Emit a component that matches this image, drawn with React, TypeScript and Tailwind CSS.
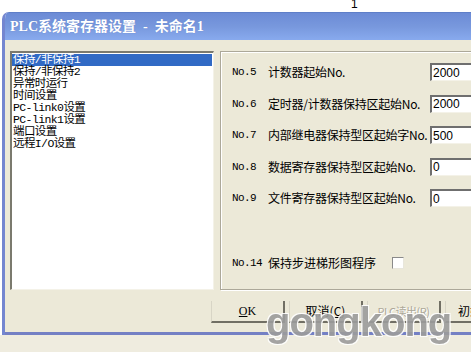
import React from "react";

const items = [
  "保持/非保持1",
  "保持/非保持2",
  "异常时运行",
  "时间设置",
  "PC-link0设置",
  "PC-link1设置",
  "端口设置",
  "远程I/O设置",
];

const rows = [
  { no: "No.5", label: "计数器起始No.", value: "2000" },
  { no: "No.6", label: "定时器/计数器保持区起始No.", value: "2000" },
  { no: "No.7", label: "内部继电器保持型区起始字No.", value: "500" },
  { no: "No.8", label: "数据寄存器保持型区起始No.", value: "0" },
  { no: "No.9", label: "文件寄存器保持型区起始No.", value: "0" },
];

const font = "font-['Liberation_Serif','Noto_Sans_CJK_SC',serif]";

export default function App() {
  return (
    <div className={`relative w-[471px] h-[352px] overflow-hidden bg-white ${font} text-[12px] leading-[12px] text-black`}>
      <div className="h-[12px] relative">
        <span className="absolute left-[351px] top-[-2px] text-[12px] leading-[12px] font-['Liberation_Sans',sans-serif]">1</span>
      </div>
      <div className="ml-[2px] w-[560px] rounded-tl-[7px] overflow-hidden border-l-[3px] border-[#7486d0] flex flex-col">
        <div className="h-[28px] bg-gradient-to-b from-[#6c8bd6] via-[#7898dd] to-[#88aaee] border-t border-[#5f7fc8] flex items-center pl-[5px]">
          <span className="text-white text-[14px] leading-[14px] font-bold whitespace-pre font-['Liberation_Serif','Noto_Sans_CJK_SC',serif] [text-shadow:0_0_1px_#5a78c0]">
            {"PLC系统寄存器设置  -  未命名1"}
          </span>
        </div>
        <div className="h-[292px] bg-[#ece9d8] flex flex-col pl-[5px] pt-[11px]">
          <div className="flex gap-[6px] h-[239px]">
            <div className="w-[204px] h-full bg-white border-t-2 border-l-2 border-[#7b7a6e] border-r border-b border-r-[#f4f2e8] border-b-[#f4f2e8] pt-[1px] pr-[1px]">
              {items.map((t, i) => (
                <div
                  key={t}
                  className={`h-[12px] pl-[1px] whitespace-nowrap font-['Liberation_Mono','Noto_Sans_CJK_SC',monospace] text-[11.5px] leading-[12px] tracking-[-0.6px] ${
                    i === 0 ? "bg-[#316ac5] text-white" : ""
                  }`}
                >
                  {t}
                </div>
              ))}
            </div>
            <div className="flex-1 h-full border border-[#aca899] shadow-[inset_1px_1px_0_#fff,1px_1px_0_#fff] pl-[11px] pt-[11px] flex flex-col">
              <div className="flex flex-col gap-[13.5px]">
                {rows.map((r) => (
                  <div key={r.no} className="flex items-center h-[18px]">
                    <span className="w-[36px] text-[11px] font-['Liberation_Mono',monospace] tracking-[-0.6px] whitespace-nowrap">{r.no}</span>
                    <span className="w-[162px] whitespace-nowrap font-['Noto_Sans_CJK_SC',sans-serif] text-[12px] tracking-[-0.25px]">
                      {r.label}
                    </span>
                    <div className="w-[70px] h-[18px] bg-white border-t-2 border-l-2 border-[#6f6f6f] border-r border-b border-r-[#f4f2e8] border-b-[#f4f2e8] flex items-center pl-[1px] font-['Liberation_Sans',sans-serif] text-[12px]">
                      {r.value}
                    </div>
                  </div>
                ))}
              </div>
              <div className="flex items-center h-[18px] mt-[47px]">
                <span className="w-[36px] text-[11px] font-['Liberation_Mono',monospace] tracking-[-0.6px] whitespace-nowrap">No.14</span>
                <span className="w-[124px] whitespace-nowrap font-['Noto_Sans_CJK_SC',sans-serif] text-[12px]">
                  保持步进梯形图程序
                </span>
                <div className="w-[12px] h-[12px] bg-white border-t border-l border-[#8a8a8a] border-r border-b border-r-[#e8e6dc] border-b-[#e8e6dc]" />
              </div>
            </div>
          </div>
          <div className="flex gap-[4px] mt-[11px] ml-[201px] h-[22px]">
            <div className="w-[74px] h-full border-b-2 border-r-2 border-[#716f64] border-l border-l-[#d8d5c6] flex items-center justify-center text-[12px] font-['Liberation_Serif','Noto_Sans_CJK_SC',serif]">
              <span><span className="underline">O</span>K</span>
            </div>
            <div className="w-[74px] h-full border-b-2 border-r-2 border-[#716f64] border-l border-l-[#d8d5c6] flex items-center justify-center text-[12px] font-['Noto_Sans_CJK_SC',sans-serif]">
              <span>取消(<span className="underline">C</span>)</span>
            </div>
            <div className="w-[74px] h-full border-b-2 border-r-2 border-[#716f64] border-l border-l-[#d8d5c6] flex items-center justify-center text-[11px] text-[#aca899] [text-shadow:1px_1px_0_#fff] font-['Noto_Sans_CJK_SC',sans-serif] tracking-[-0.5px]">
              <span>PLC读出(<span className="underline">R</span>)</span>
            </div>
            <div className="w-[74px] h-full border-b-2 border-r-2 border-[#716f64] border-l border-l-[#d8d5c6] flex items-center pl-[12px] text-[12px] font-['Noto_Sans_CJK_SC',sans-serif]">
              <span>初始化</span>
            </div>
          </div>
        </div>
        <div className="h-[3px] bg-[#7480c4]" />
      </div>
      <div className="h-[17px] bg-[#efecdf]" />
      <div className="absolute left-[266px] top-[302px] text-[40px] leading-[40px] font-bold font-['Liberation_Sans',sans-serif] text-[#9c9c9c] tracking-[-1px] [text-shadow:1px_1px_0_#fff,-1px_-1px_0_#fff,1px_-1px_0_#fff,-1px_1px_0_#fff] opacity-90">
        gongkong
      </div>
    </div>
  );
}
